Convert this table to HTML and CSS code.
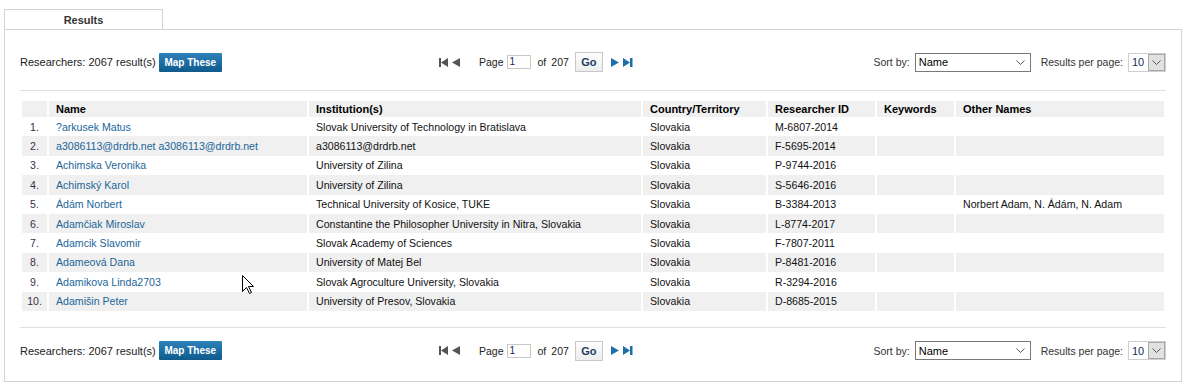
FILE: index.html
```html
<!DOCTYPE html>
<html>
<head>
<meta charset="utf-8">
<title>Results</title>
<link rel="stylesheet" href="styles.css">
</head>
<body>
<div class="page">
  <div class="tab">Results</div>
  <div class="panel">
    <div class="toolbar">
      <div class="tb-left">
        <span class="count">Researchers: 2067 result(s)</span>
        <span class="map-btn">Map These</span>
      </div>
      <div class="tb-center">
        <svg class="nav first" width="9" height="9" viewBox="0 0 9 9"><rect x="0" y="0" width="2" height="9"/><polygon points="9,0 2,4.5 9,9"/></svg>
        <svg class="nav prev" width="9" height="9" viewBox="0 0 9 9"><polygon points="8,0 0,4.5 8,9"/></svg>
        <span class="lbl-page">Page</span>
        <span class="page-input">1</span>
        <span class="lbl-of">of</span>
        <span class="lbl-total">207</span>
        <span class="go-btn">Go</span>
        <svg class="nav next" width="9" height="9" viewBox="0 0 9 9"><polygon points="0,0 8,4.5 0,9"/></svg>
        <svg class="nav last" width="10" height="9" viewBox="0 0 10 9"><polygon points="0,0 7,4.5 0,9"/><rect x="7" y="0" width="2.5" height="9"/></svg>
      </div>
      <div class="tb-right">
        <span class="lbl-sort">Sort by:</span>
        <span class="select-name"><span>Name</span><svg width="9" height="5" viewBox="0 0 9 5"><polyline points="0.5,0.5 4.5,4.5 8.5,0.5"/></svg></span>
        <span class="lbl-pp">Results per page:</span>
        <span class="select-pp"><span class="pp-val">10</span><span class="pp-btn"><svg width="9" height="5" viewBox="0 0 9 5"><polyline points="0.5,0.5 4.5,4.5 8.5,0.5"/></svg></span></span>
      </div>
    </div>

    <div class="rule rule-top"></div>

    <table class="results">
      <thead>
        <tr>
          <th class="c-num"></th>
          <th class="c-name">Name</th>
          <th class="c-inst">Institution(s)</th>
          <th class="c-country">Country/Territory</th>
          <th class="c-rid">Researcher ID</th>
          <th class="c-kw">Keywords</th>
          <th class="c-other">Other Names</th>
        </tr>
      </thead>
      <tbody>
        <tr><td class="num">1.</td><td><a>?arkusek Matus</a></td><td>Slovak University of Technology in Bratislava</td><td>Slovakia</td><td>M-6807-2014</td><td></td><td></td></tr>
        <tr><td class="num">2.</td><td><a>a3086113@drdrb.net a3086113@drdrb.net</a></td><td>a3086113@drdrb.net</td><td>Slovakia</td><td>F-5695-2014</td><td></td><td></td></tr>
        <tr><td class="num">3.</td><td><a>Achimska Veronika</a></td><td>University of Zilina</td><td>Slovakia</td><td>P-9744-2016</td><td></td><td></td></tr>
        <tr><td class="num">4.</td><td><a>Achimský Karol</a></td><td>University of Zilina</td><td>Slovakia</td><td>S-5646-2016</td><td></td><td></td></tr>
        <tr><td class="num">5.</td><td><a>Ádám Norbert</a></td><td>Technical University of Kosice, TUKE</td><td>Slovakia</td><td>B-3384-2013</td><td></td><td>Norbert Adam, N. Ádám, N. Adam</td></tr>
        <tr><td class="num">6.</td><td><a>Adamčiak Miroslav</a></td><td>Constantine the Philosopher University in Nitra, Slovakia</td><td>Slovakia</td><td>L-8774-2017</td><td></td><td></td></tr>
        <tr><td class="num">7.</td><td><a>Adamcik Slavomir</a></td><td>Slovak Academy of Sciences</td><td>Slovakia</td><td>F-7807-2011</td><td></td><td></td></tr>
        <tr><td class="num">8.</td><td><a>Adameová Dana</a></td><td>University of Matej Bel</td><td>Slovakia</td><td>P-8481-2016</td><td></td><td></td></tr>
        <tr><td class="num">9.</td><td><a>Adamikova Linda2703</a></td><td>Slovak Agroculture University, Slovakia</td><td>Slovakia</td><td>R-3294-2016</td><td></td><td></td></tr>
        <tr><td class="num">10.</td><td><a>Adamišin Peter</a></td><td>University of Presov, Slovakia</td><td>Slovakia</td><td>D-8685-2015</td><td></td><td></td></tr>
      </tbody>
    </table>

    <div class="rule rule-bottom"></div>

    <div class="toolbar">
      <div class="tb-left">
        <span class="count">Researchers: 2067 result(s)</span>
        <span class="map-btn">Map These</span>
      </div>
      <div class="tb-center">
        <svg class="nav first" width="9" height="9" viewBox="0 0 9 9"><rect x="0" y="0" width="2" height="9"/><polygon points="9,0 2,4.5 9,9"/></svg>
        <svg class="nav prev" width="9" height="9" viewBox="0 0 9 9"><polygon points="8,0 0,4.5 8,9"/></svg>
        <span class="lbl-page">Page</span>
        <span class="page-input">1</span>
        <span class="lbl-of">of</span>
        <span class="lbl-total">207</span>
        <span class="go-btn">Go</span>
        <svg class="nav next" width="9" height="9" viewBox="0 0 9 9"><polygon points="0,0 8,4.5 0,9"/></svg>
        <svg class="nav last" width="10" height="9" viewBox="0 0 10 9"><polygon points="0,0 7,4.5 0,9"/><rect x="7" y="0" width="2.5" height="9"/></svg>
      </div>
      <div class="tb-right">
        <span class="lbl-sort">Sort by:</span>
        <span class="select-name"><span>Name</span><svg width="9" height="5" viewBox="0 0 9 5"><polyline points="0.5,0.5 4.5,4.5 8.5,0.5"/></svg></span>
        <span class="lbl-pp">Results per page:</span>
        <span class="select-pp"><span class="pp-val">10</span><span class="pp-btn"><svg width="9" height="5" viewBox="0 0 9 5"><polyline points="0.5,0.5 4.5,4.5 8.5,0.5"/></svg></span></span>
      </div>
    </div>
  </div>
</div>
<svg class="cursor" width="13" height="20" viewBox="0 0 13 20"><polygon points="0.5,0.5 0.5,16.5 4.5,12.5 7.5,18.5 9.5,17.5 6.5,11.5 11.5,11.5"/></svg>
</body>
</html>
```

FILE: styles.css
```css
body {
  margin: 0;
  font-family: "Liberation Sans", Arial, sans-serif;
  font-size: 11px;
  color: #111;
  background: #fff;
}

.page {
  padding: 9px 0 0 4px;
  width: 1178px;
}

.tab {
  width: 157px;
  height: 19px;
  border: 1px solid #d3d3d3;
  border-bottom: 0;
  display: flex;
  align-items: center;
  justify-content: center;
  font-weight: bold;
  color: #333;
}

.panel {
  border: 1px solid #d3d3d3;
  padding: 22px 15px 20px;
}

.toolbar {
  display: grid;
  grid-template-columns: 419px auto 1fr;
  align-items: center;
  height: 20px;
}

.tb-left,
.tb-center,
.tb-right {
  display: flex;
  align-items: center;
}

.tb-right {
  justify-content: flex-end;
}

.count {
  color: #222;
}

.map-btn {
  margin-left: 3px;
  width: 63px;
  height: 19px;
  box-sizing: border-box;
  display: flex;
  align-items: center;
  justify-content: center;
  background: linear-gradient(#2f82ba, #0e5a8c);
  color: #fff;
  font-weight: bold;
  font-size: 10px;
  border-radius: 1px;
}

.nav {
  display: block;
}

.first,
.prev {
  fill: #555;
}

.prev {
  margin-left: 4px;
}

.next,
.last {
  fill: #1f6fa6;
}

.next {
  margin-left: 8px;
}

.last {
  margin-left: 3px;
}

.tb-center span.lbl-page,
.tb-center span.lbl-of,
.tb-center span.lbl-total {
  font-size: 10.5px;
  color: #222;
}

.lbl-page {
  margin-left: 18px;
}

.page-input {
  margin-left: 3px;
  width: 24px;
  height: 14px;
  box-sizing: border-box;
  border: 1px solid #c8c8c8;
  font-size: 10px;
  line-height: 12px;
  padding-left: 2px;
  color: #1a2a5a;
}

.lbl-of {
  margin-left: 7px;
}

.lbl-total {
  margin-left: 5px;
}

.go-btn {
  margin-left: 6px;
  width: 28px;
  height: 20px;
  box-sizing: border-box;
  border: 1px solid #c8c8c8;
  background: linear-gradient(#fdfdfd, #ededed);
  display: flex;
  align-items: center;
  justify-content: center;
  font-weight: bold;
  color: #1d3c66;
}

.lbl-sort,
.lbl-pp {
  color: #333;
  font-size: 10.5px;
}

.select-name {
  margin-left: 5px;
  width: 116px;
  height: 19px;
  box-sizing: border-box;
  border: 1px solid #7a7a7a;
  display: flex;
  align-items: center;
  justify-content: space-between;
  padding: 0 5px 0 3px;
  color: #000;
}

.select-name svg,
.pp-btn svg {
  fill: none;
  stroke: #555;
  stroke-width: 1;
}

.lbl-pp {
  margin-left: 10px;
}

.select-pp {
  margin-left: 5px;
  width: 38px;
  height: 19px;
  box-sizing: border-box;
  border: 1px solid #cfcfcf;
  display: flex;
  align-items: stretch;
}

.pp-val {
  flex: 1;
  display: flex;
  align-items: center;
  padding-left: 3px;
  color: #1a2a5a;
}

.pp-btn {
  width: 17px;
  box-sizing: border-box;
  border: 1px solid #a8a8a8;
  background: #e1e1e1;
  display: flex;
  align-items: center;
  justify-content: center;
}

.rule {
  height: 1px;
  background: #e0e0e0;
}

.rule-top {
  margin: 18px 0 10px;
}

.rule-bottom {
  margin: 16px 0 13px;
}

.results {
  width: 1146px;
  table-layout: fixed;
  border-collapse: separate;
  border-spacing: 2px 0;
}

.results th,
.results td {
  box-sizing: border-box;
  padding: 0 7px;
  text-align: left;
  vertical-align: middle;
  white-space: nowrap;
  overflow: hidden;
}

.results thead tr {
  height: 16px;
}

.results th {
  background: #f0f0f0;
  font-weight: bold;
  color: #000;
  font-size: 11px;
}

.results tbody tr {
  height: 19.4px;
}

.results tbody tr:nth-child(even) td {
  background: #f0f0f0;
}

.results td {
  color: #111;
  font-size: 10.6px;
}

.results td.num {
  text-align: center;
  padding: 0;
  color: #3a3045;
}

.results a {
  color: #1b6699;
  text-decoration: none;
}

.c-num { width: 25px; }
.c-name { width: 258px; }
.c-inst { width: 332px; }
.c-country { width: 123px; }
.c-rid { width: 107px; }
.c-kw { width: 77px; }
.c-other { width: 208px; }

.cursor {
  position: absolute;
  left: 242px;
  top: 275px;
  fill: #fff;
  stroke: #000;
  stroke-width: 1;
}
```
